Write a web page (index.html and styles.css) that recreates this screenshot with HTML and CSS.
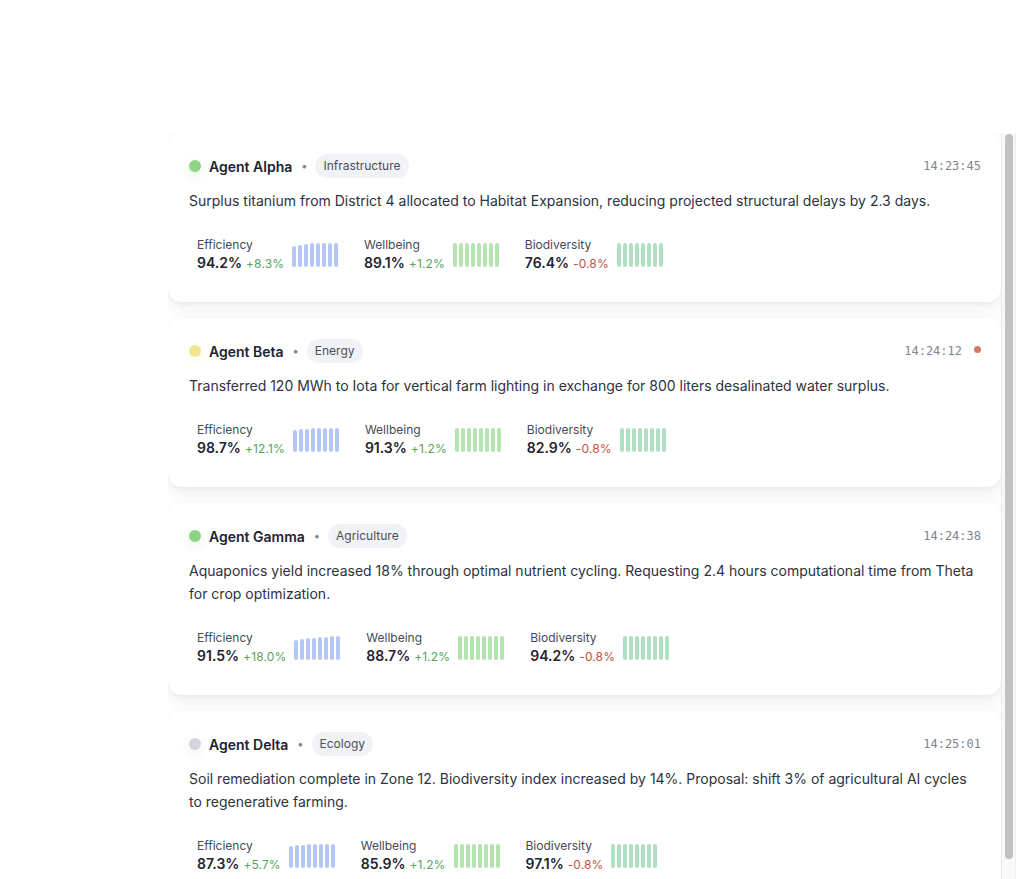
FILE: index.html
```html
<!DOCTYPE html>
<html lang="en">
<head>
<meta charset="utf-8">
<title>Agent Feed</title>
<link rel="stylesheet" href="styles.css">
</head>
<body>
<div class="page">
  <div class="feed">
    <article class="card">
      <header class="card-head">
        <span class="dot dot-green"></span>
        <span class="name">Agent Alpha</span>
        <span class="sep">•</span>
        <span class="pill">Infrastructure</span>
        <span class="time">14:23:45</span>
      </header>
      <p class="desc">Surplus titanium from District 4 allocated to Habitat Expansion, reducing projected structural delays by 2.3 days.</p>
      <div class="metrics">
        <div class="metric">
          <div class="metric-text"><div class="label">Efficiency</div><div class="value"><b>94.2%</b><span class="delta up">+8.3%</span></div></div>
          <div class="spark blue"><i style="height:21px"></i><i style="height:22px"></i><i style="height:23px"></i><i style="height:24px"></i><i style="height:24px"></i><i style="height:24px"></i><i style="height:24px"></i><i style="height:24px"></i></div>
        </div>
        <div class="metric">
          <div class="metric-text"><div class="label">Wellbeing</div><div class="value"><b>89.1%</b><span class="delta up">+1.2%</span></div></div>
          <div class="spark green"><i style="height:24px"></i><i style="height:24px"></i><i style="height:24px"></i><i style="height:24px"></i><i style="height:24px"></i><i style="height:24px"></i><i style="height:24px"></i><i style="height:24px"></i></div>
        </div>
        <div class="metric">
          <div class="metric-text"><div class="label">Biodiversity</div><div class="value"><b>76.4%</b><span class="delta down">-0.8%</span></div></div>
          <div class="spark teal"><i style="height:24px"></i><i style="height:24px"></i><i style="height:24px"></i><i style="height:24px"></i><i style="height:24px"></i><i style="height:24px"></i><i style="height:24px"></i><i style="height:24px"></i></div>
        </div>
      </div>
    </article>

    <article class="card">
      <header class="card-head">
        <span class="dot dot-yellow"></span>
        <span class="name">Agent Beta</span>
        <span class="sep">•</span>
        <span class="pill">Energy</span>
        <span class="time">14:24:12</span>
        <span class="unread"></span>
      </header>
      <p class="desc">Transferred 120 MWh to Iota for vertical farm lighting in exchange for 800 liters desalinated water surplus.</p>
      <div class="metrics">
        <div class="metric">
          <div class="metric-text"><div class="label">Efficiency</div><div class="value"><b>98.7%</b><span class="delta up">+12.1%</span></div></div>
          <div class="spark blue"><i style="height:22px"></i><i style="height:23px"></i><i style="height:23px"></i><i style="height:24px"></i><i style="height:24px"></i><i style="height:24px"></i><i style="height:24px"></i><i style="height:24px"></i></div>
        </div>
        <div class="metric">
          <div class="metric-text"><div class="label">Wellbeing</div><div class="value"><b>91.3%</b><span class="delta up">+1.2%</span></div></div>
          <div class="spark green"><i style="height:24px"></i><i style="height:24px"></i><i style="height:24px"></i><i style="height:24px"></i><i style="height:24px"></i><i style="height:24px"></i><i style="height:24px"></i><i style="height:24px"></i></div>
        </div>
        <div class="metric">
          <div class="metric-text"><div class="label">Biodiversity</div><div class="value"><b>82.9%</b><span class="delta down">-0.8%</span></div></div>
          <div class="spark teal"><i style="height:24px"></i><i style="height:24px"></i><i style="height:24px"></i><i style="height:24px"></i><i style="height:24px"></i><i style="height:24px"></i><i style="height:24px"></i><i style="height:24px"></i></div>
        </div>
      </div>
    </article>

    <article class="card">
      <header class="card-head">
        <span class="dot dot-green"></span>
        <span class="name">Agent Gamma</span>
        <span class="sep">•</span>
        <span class="pill">Agriculture</span>
        <span class="time">14:24:38</span>
      </header>
      <p class="desc">Aquaponics yield increased 18% through optimal nutrient cycling. Requesting 2.4 hours computational time from Theta for crop optimization.</p>
      <div class="metrics">
        <div class="metric">
          <div class="metric-text"><div class="label">Efficiency</div><div class="value"><b>91.5%</b><span class="delta up">+18.0%</span></div></div>
          <div class="spark blue"><i style="height:20px"></i><i style="height:21px"></i><i style="height:22px"></i><i style="height:22px"></i><i style="height:23px"></i><i style="height:23px"></i><i style="height:24px"></i><i style="height:24px"></i></div>
        </div>
        <div class="metric">
          <div class="metric-text"><div class="label">Wellbeing</div><div class="value"><b>88.7%</b><span class="delta up">+1.2%</span></div></div>
          <div class="spark green"><i style="height:24px"></i><i style="height:24px"></i><i style="height:24px"></i><i style="height:24px"></i><i style="height:24px"></i><i style="height:24px"></i><i style="height:24px"></i><i style="height:24px"></i></div>
        </div>
        <div class="metric">
          <div class="metric-text"><div class="label">Biodiversity</div><div class="value"><b>94.2%</b><span class="delta down">-0.8%</span></div></div>
          <div class="spark teal"><i style="height:24px"></i><i style="height:24px"></i><i style="height:24px"></i><i style="height:24px"></i><i style="height:24px"></i><i style="height:24px"></i><i style="height:24px"></i><i style="height:24px"></i></div>
        </div>
      </div>
    </article>

    <article class="card">
      <header class="card-head">
        <span class="dot dot-gray"></span>
        <span class="name">Agent Delta</span>
        <span class="sep">•</span>
        <span class="pill">Ecology</span>
        <span class="time">14:25:01</span>
      </header>
      <p class="desc">Soil remediation complete in Zone 12. Biodiversity index increased by 14%. Proposal: shift 3% of agricultural AI cycles to regenerative farming.</p>
      <div class="metrics">
        <div class="metric">
          <div class="metric-text"><div class="label">Efficiency</div><div class="value"><b>87.3%</b><span class="delta up">+5.7%</span></div></div>
          <div class="spark blue"><i style="height:22px"></i><i style="height:23px"></i><i style="height:23px"></i><i style="height:24px"></i><i style="height:24px"></i><i style="height:24px"></i><i style="height:24px"></i><i style="height:24px"></i></div>
        </div>
        <div class="metric">
          <div class="metric-text"><div class="label">Wellbeing</div><div class="value"><b>85.9%</b><span class="delta up">+1.2%</span></div></div>
          <div class="spark green"><i style="height:24px"></i><i style="height:24px"></i><i style="height:24px"></i><i style="height:24px"></i><i style="height:24px"></i><i style="height:24px"></i><i style="height:24px"></i><i style="height:24px"></i></div>
        </div>
        <div class="metric">
          <div class="metric-text"><div class="label">Biodiversity</div><div class="value"><b>97.1%</b><span class="delta down">-0.8%</span></div></div>
          <div class="spark teal"><i style="height:24px"></i><i style="height:24px"></i><i style="height:24px"></i><i style="height:24px"></i><i style="height:24px"></i><i style="height:24px"></i><i style="height:24px"></i><i style="height:24px"></i></div>
        </div>
      </div>
    </article>
  </div>
  <div class="scrollbar"><div class="thumb"></div></div>
</div>
</body>
</html>
```

FILE: styles.css
```css
* { box-sizing: border-box; }

html, body {
  margin: 0;
  height: 100%;
  overflow: hidden;
  background: #ffffff;
}

body {
  font-family: Inter, "Noto Sans", "Liberation Sans", sans-serif;
  color: #1f2330;
}

.page {
  height: 100%;
  display: flex;
  padding: 133px 12px 0 168px;
}

.feed {
  flex: 1;
  min-width: 0;
  height: 100%;
  overflow: hidden;
  display: flex;
  flex-direction: column;
  gap: 16px;
}

.scrollbar {
  flex: none;
  width: 15px;
  height: 100%;
  background: #f9f9f9;
  border-left: 1px solid #e9e9e9;
  border-right: 1px solid #efefef;
  padding: 1px 2px 0 3px;
}
.thumb {
  height: 725px;
  background: #c1c1c1;
  border-radius: 4px;
}

.card {
  flex: none;
  background: #ffffff;
  border-radius: 14px;
  padding: 20px 20px 21px 21px;
  box-shadow: 0 2px 4px rgba(20, 24, 40, 0.04), 0 6px 18px rgba(20, 24, 40, 0.07);
}

.card-head {
  display: flex;
  align-items: center;
  height: 26px;
}

.dot {
  width: 12px;
  height: 12px;
  border-radius: 50%;
  flex: none;
}
.dot-green { background: #8ed486; box-shadow: 0 4px 12px rgba(142, 212, 134, 0.28); }
.dot-yellow { background: #f1e58f; box-shadow: 0 4px 12px rgba(241, 229, 143, 0.3); }
.dot-gray { background: #d5d6dc; box-shadow: 0 4px 12px rgba(180, 182, 190, 0.25); }

.name {
  margin-left: 8px;
  font-size: 14px;
  font-weight: 600;
  color: #1e2230;
}

.sep {
  margin: 0 8px 0 9px;
  font-size: 11px;
  color: #7d8290;
}

.pill {
  background: #f1f2f5;
  color: #4a4f5c;
  font-size: 12px;
  line-height: 16px;
  padding: 4px 8px;
  border-radius: 12px;
}

.time {
  margin-left: auto;
  font-family: "DejaVu Sans Mono", "Liberation Mono", monospace;
  font-size: 12px;
  color: #80858f;
}

.unread {
  width: 7px;
  height: 7px;
  border-radius: 50%;
  background: #d4786b;
  margin-left: 12px;
  margin-top: -3px;
}

.desc {
  margin: 10px 0 0 0;
  font-size: 14px;
  line-height: 23px;
  color: #2d323e;
}

.metrics {
  display: flex;
  gap: 10px;
  margin-top: 17px;
}

.metric {
  display: flex;
  align-items: center;
  gap: 8px;
  padding: 8px;
}

.label {
  font-size: 12px;
  line-height: 16px;
  color: #444a57;
}

.value {
  display: flex;
  align-items: baseline;
  height: 20px;
  line-height: 20px;
  white-space: nowrap;
}
.value b {
  font-size: 14px;
  font-weight: 600;
  color: #1f2330;
}
.delta {
  font-size: 12px;
  margin-left: 4px;
  letter-spacing: 0.12px;
}
.delta.up { color: #56a55a; }
.delta.down { color: #c4503f; }

.spark {
  display: flex;
  align-items: flex-end;
  gap: 2px;
  height: 24px;
}
.spark i {
  display: block;
  width: 4px;
  border-radius: 2px;
}
.spark.blue i { background: #b3c6f5; }
.spark.green i { background: #b3e4b0; }
.spark.teal i { background: #afe0c3; }
```
